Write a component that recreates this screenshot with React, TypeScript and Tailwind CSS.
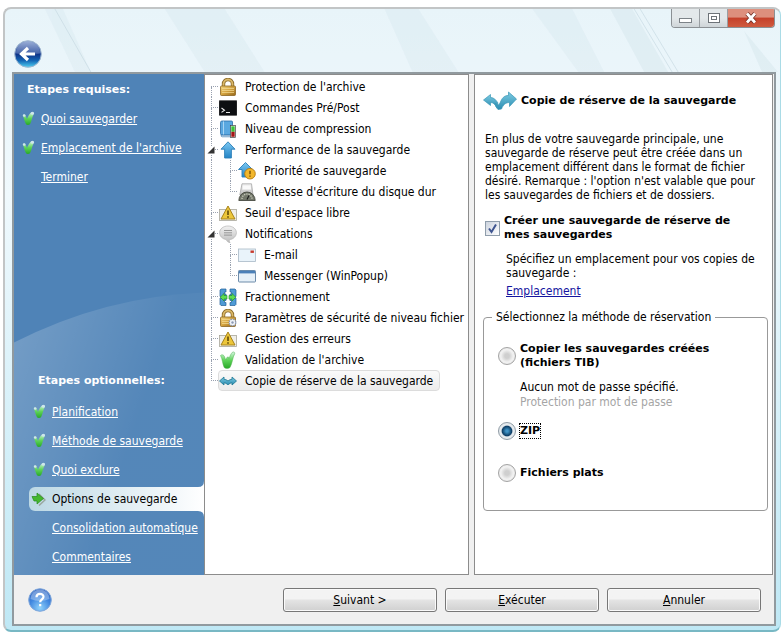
import React, { useState } from 'react';

const FONT = "font-['DejaVu_Sans_Condensed','DejaVu_Sans',sans-serif]";
const BOLD = "font-['DejaVu_Sans',sans-serif] text-[11px] font-bold";

type IconName =
  | 'lock' | 'console' | 'book' | 'arrow' | 'priority' | 'disk' | 'warning' | 'bubble'
  | 'mail' | 'popup' | 'split' | 'lockGear' | 'check' | 'swap';

interface TreeNode {
  label: string;
  icon: IconName;
  children?: TreeNode[];
}

const tree: TreeNode[] = [
  { label: "Protection de l'archive", icon: 'lock' },
  { label: 'Commandes Pré/Post', icon: 'console' },
  { label: 'Niveau de compression', icon: 'book' },
  {
    label: 'Performance de la sauvegarde',
    icon: 'arrow',
    children: [
      { label: 'Priorité de sauvegarde', icon: 'priority' },
      { label: "Vitesse d'écriture du disque dur", icon: 'disk' },
    ],
  },
  { label: "Seuil d'espace libre", icon: 'warning' },
  {
    label: 'Notifications',
    icon: 'bubble',
    children: [
      { label: 'E-mail', icon: 'mail' },
      { label: 'Messenger (WinPopup)', icon: 'popup' },
    ],
  },
  { label: 'Fractionnement', icon: 'split' },
  { label: 'Paramètres de sécurité de niveau fichier', icon: 'lockGear' },
  { label: 'Gestion des erreurs', icon: 'warning' },
  { label: "Validation de l'archive", icon: 'check' },
  { label: 'Copie de réserve de la sauvegarde', icon: 'swap' },
];

const requiredSteps = [
  { label: 'Quoi sauvegarder', done: true },
  { label: "Emplacement de l'archive", done: true },
  { label: 'Terminer', done: false },
];

const optionalSteps = [
  { label: 'Planification', done: true },
  { label: 'Méthode de sauvegarde', done: true },
  { label: 'Quoi exclure', done: true },
  { label: 'Options de sauvegarde', current: true },
  { label: 'Consolidation automatique' },
  { label: 'Commentaires' },
];

// Shared gradients, referenced by id from the icons below
const Gradients = () => (
  <svg width="0" height="0" className="absolute" aria-hidden="true">
    <defs>
      <linearGradient id="gold" x1="0" y1="0" x2="1" y2="1">
        <stop offset="0" stopColor="#f3d580" />
        <stop offset="0.5" stopColor="#d3a23e" />
        <stop offset="1" stopColor="#94661a" />
      </linearGradient>
      <linearGradient id="sky" x1="0" y1="0" x2="0" y2="1">
        <stop offset="0" stopColor="#7cc8f2" />
        <stop offset="1" stopColor="#2384c6" />
      </linearGradient>
      <linearGradient id="teal" x1="0" y1="0" x2="0" y2="1">
        <stop offset="0" stopColor="#7dcbe2" />
        <stop offset="1" stopColor="#2b8db2" />
      </linearGradient>
      <linearGradient id="leaf" x1="0" y1="0" x2="0" y2="1">
        <stop offset="0" stopColor="#d6f5e4" />
        <stop offset="0.5" stopColor="#5fd45a" />
        <stop offset="1" stopColor="#27a827" />
      </linearGradient>
      <linearGradient id="silver" x1="0" y1="0" x2="0" y2="1">
        <stop offset="0" stopColor="#f2f2f2" />
        <stop offset="1" stopColor="#bcbcbc" />
      </linearGradient>
      <linearGradient id="orb" x1="0" y1="0" x2="0" y2="1">
        <stop offset="0" stopColor="#8da4d2" />
        <stop offset="0.45" stopColor="#2c4f9e" />
        <stop offset="0.5" stopColor="#0e3287" />
        <stop offset="0.75" stopColor="#1467b5" />
        <stop offset="1" stopColor="#4fd0f2" />
      </linearGradient>
      <radialGradient id="help" cx="0.5" cy="0.85" r="0.8">
        <stop offset="0" stopColor="#8fd2fb" />
        <stop offset="0.6" stopColor="#3f86df" />
        <stop offset="1" stopColor="#3a6cc4" />
      </radialGradient>
    </defs>
  </svg>
);

const Lock = () => (
  <>
    <path d="M4.500 9V6a4.500 4.500 0 0 1 9 0v3" fill="none" stroke="#8a6a2a" strokeWidth="3.4" />
    <path d="M4.500 9V6a4.500 4.500 0 0 1 9 0v3" fill="none" stroke="#dcb968" strokeWidth="1.8" />
    <rect x="1.5" y="8" width="15" height="9.5" rx="1" fill="url(#gold)" stroke="#8c6420" strokeWidth="0.8" />
    <path d="M3 10.500h12M3 12.500h12M3 14.500h12" stroke="#f5dc96" strokeWidth="0.7" />
  </>
);

const glyphs: Record<IconName, React.ReactNode> = {
  lock: <Lock />,
  console: (
    <>
      <rect x="0" y="1.5" width="18" height="15" rx="0.8" fill="#0d0f12" stroke="#555" strokeWidth="0.6" />
      <path d="M2.500 9 5.500 11.200 2.500 13.400M7 13.500h4" fill="none" stroke="#e8e8e8" strokeWidth="1.1" />
    </>
  ),
  book: (
    <>
      <path d="M3 1h9.500a1 1 0 0 1 1 1v13H3a1.500 1.500 0 0 1-1.500-1.500v-11A1.500 1.500 0 0 1 3 1Z" fill="#5aa8e0" stroke="#2a6ca8" strokeWidth="0.8" />
      <path d="M4.500 1.400v13.200" stroke="#a9d5f4" />
      <path d="M2 15.200h11v1.600H3.500A1.500 1.500 0 0 1 2 15.200Z" fill="#dcebf5" stroke="#2a6ca8" strokeWidth="0.6" />
      <rect x="11.5" y="5.5" width="5" height="12" fill="#fff" stroke="#444" strokeWidth="0.7" />
      <rect x="12.3" y="6.3" width="3.4" height="5.5" fill="#3cc43a" />
      <rect x="12.3" y="11.8" width="3.4" height="5" fill="#a31515" />
    </>
  ),
  arrow: <path d="M9 .8 16 8.200h-3.600V17H5.600V8.200H2Z" fill="url(#sky)" stroke="#2c7fb8" strokeWidth="0.9" />,
  priority: (
    <>
      <path d="M7.500.5 14.500 7.500H11V15H4V7.500H.5Z" fill="url(#sky)" stroke="#2c7fb8" strokeWidth="0.9" />
      <circle cx="12" cy="11.7" r="5.3" fill="#f2b72c" stroke="#b77c10" strokeWidth="0.9" />
      <path d="M12 8.700v3.600M12 13.600v1.200" stroke="#6b4503" strokeWidth="1.3" />
    </>
  ),
  disk: (
    <>
      <path d="M4 .8h9.500L15 12H1.800Z" fill="url(#silver)" stroke="#a5a5a5" strokeWidth="0.8" />
      <path d="M5 2.500h7.500l.6 4H4.400Z" fill="#fafafa" />
      <path d="M.8 17.500a8.200 8.500 0 0 1 16.400 0Z" fill="#72776a" stroke="#3a3d33" strokeWidth="0.8" />
      <path d="M4 16a5 5 0 0 1 10 0" fill="none" stroke="#c9ccbc" strokeWidth="1.3" strokeDasharray="1.3 1" />
      <path d="m9 16.500 2-4" stroke="#1a1a1a" strokeWidth="1.1" />
    </>
  ),
  warning: (
    <>
      <rect x="0.5" y="5.5" width="17" height="11" fill="#efeee8" stroke="#a9a69a" strokeWidth="0.8" />
      <path d="M9 2 16 15H2Z" fill="#ecc63a" stroke="#a8831a" strokeWidth="1" strokeLinejoin="round" />
      <path d="M9 6.500V11M9 12.300v1.400" stroke="#574205" strokeWidth="1.5" />
    </>
  ),
  bubble: (
    <>
      <path d="M9 1c4.800 0 8.400 3 8.400 6.700s-3.400 6.700-6.900 6.900c-.3 1.200-.2 2.200.6 3.100-2.200-.4-3.400-1.600-3.900-3.200C3.400 14 .6 11.200.6 7.700.6 4 4.200 1 9 1Z" fill="url(#silver)" stroke="#b3b3b3" strokeWidth="0.7" />
      <path d="M5 5.500h8M5 7.800h8M5 10.100h8" stroke="#8f8f8f" strokeWidth="0.9" />
    </>
  ),
  mail: (
    <>
      <rect x="0.5" y="3" width="17" height="12.5" fill="#e9f3fa" stroke="#a9b9c6" strokeWidth="0.8" />
      <rect x="12.5" y="4.5" width="3.4" height="2.4" fill="#c83a2c" />
    </>
  ),
  popup: (
    <>
      <rect x="0.5" y="3.5" width="17" height="11.5" rx="0.8" fill="#e6f0f8" stroke="#5f7fa0" strokeWidth="0.9" />
      <rect x="0.9" y="3.8" width="16.2" height="2.6" fill="#4b80b8" />
    </>
  ),
  split: (
    <>
      <path d="M2 1h5v3H5.500v2H7v2.500H1V2ZM16 1h-5v3h1.500v2H11v2.500h6V2ZM2 17.500h5v-3H5.500v-2H7V10H1v6.500ZM16 17.500h-5v-3h1.500v-2H11V10h6v6.500Z" fill="#4f9bd6" stroke="#235f98" strokeWidth="0.7" />
      <path d="M8 7.500V11H5v2L1.200 9.200 5 5.500v2ZM10 7.500V11h3v2l3.800-3.800L13 5.500v2Z" fill="#5fdc52" stroke="#1d8a22" strokeWidth="0.6" />
    </>
  ),
  lockGear: (
    <>
      <Lock />
      <circle cx="13.5" cy="13.5" r="3.3" fill="#f1f4f9" stroke="#8d98ae" strokeWidth="1.3" strokeDasharray="1.7 .9" />
      <circle cx="13.5" cy="13.5" r="1.2" fill="#8e9ab3" />
    </>
  ),
  check: (
    <path d="M1.500 4.500C3 3 5 4 5.600 6l1.200 3L8 6.500c.6-1 1.600-.8 1.800.2l.3 1C10.800 5 12 2.600 13.500 1.200c1.200-.7 2.600.2 2.200 1.500C13.500 6.500 13.500 12 11 16.500c-1.500 1.200-4.500 1.200-5.800 0C3.500 13 3.500 8 1.500 4.500Z" fill="url(#leaf)" stroke="#4ab04a" strokeWidth="0.5" />
  ),
  swap: (
    <path d="M.5 9 5 5v2.300c1.500 0 2.800.7 4 1.700 1.200-1 2.500-1.700 4-1.700V5l4.500 4-4.500 4v-2.200c-1.500 0-2.500 1-4 2-1.500-1-2.500-2-4-2V13Z" fill="url(#teal)" stroke="#1b7592" strokeWidth="0.8" strokeLinejoin="round" />
  ),
};

const Icon: React.FC<{ name: IconName }> = ({ name }) => (
  <svg width="18" height="18" viewBox="0 0 18 18" className="shrink-0" aria-hidden="true">
    {glyphs[name]}
  </svg>
);

const StepCheck = () => (
  <svg width="13" height="15" viewBox="0 0 13 15" aria-hidden="true">
    <path d="M.8 4.800C.8 3 3 3 3.600 4.600L5 8C6 5 7.500 2.800 8.900 1.400 10.500.2 12.700 1.200 11.800 3 10 6 9.800 10 8 13.300c-1 1-3.200 1-4 0C2.400 10.500 2.200 7.500.8 4.800Z" fill="url(#leaf)" />
    <circle cx="10.4" cy="2.2" r="1.5" fill="#cfe6ee" />
    <circle cx="2.2" cy="4.5" r="1.3" fill="#cfe6ee" />
  </svg>
);

const StepArrow = () => (
  <svg width="15" height="14" viewBox="0 0 15 14" aria-hidden="true">
    <path d="m8 2 6 6-6 5.500" fill="none" stroke="#9aa79f" strokeWidth="1.5" />
    <path d="M1 4.500h5V1l6.500 5.500L6 12V9H3Z" fill="#45b82e" stroke="#278a1c" strokeWidth="0.7" />
  </svg>
);

// Dotted branch drawn left of a tree row
const Branch: React.FC<{ first?: boolean; last?: boolean }> = ({ first, last }) => (
  <span className="flex h-full w-[7px] shrink-0 flex-col">
    <span className={`h-1/2 border-b border-dotted border-gray-400 ${first ? '' : 'border-l'}`} />
    <span className={`h-1/2 border-dotted border-gray-400 ${last ? '' : 'border-l'}`} />
  </span>
);

interface TreeItemProps {
  node: TreeNode;
  first?: boolean;
  last?: boolean;
  nested?: boolean;
  selected: string;
  onSelect: (label: string) => void;
}

const TreeItem: React.FC<TreeItemProps> = ({ node, first, last, nested, selected, onSelect }) => {
  const [open, setOpen] = useState(true);
  const active = selected === node.label;

  return (
    <li>
      <div className="flex h-[21px] items-center">
        {nested && <span className="h-full w-[19px] shrink-0 border-l border-dotted border-gray-400" />}
        <span className="relative flex h-full">
          <Branch first={first} last={last} />
          {node.children && (
            <button
              type="button"
              aria-label={node.label}
              aria-expanded={open}
              onClick={() => setOpen(!open)}
              className="absolute top-[7px] -left-1 bg-white"
            >
              <svg width="8" height="8" viewBox="0 0 8 8">
                <path d="M7.500.5v7h-7Z" fill="#333" />
              </svg>
            </button>
          )}
        </span>
        <button
          type="button"
          onClick={() => onSelect(node.label)}
          className={`flex h-[21px] items-center gap-2 rounded-sm border pr-1.5 whitespace-nowrap ${
            active ? 'border-[#dcdcdc] bg-linear-to-b from-[#fafafa] to-[#ececec]' : 'border-transparent'
          }`}
        >
          <Icon name={node.icon} />
          {node.label}
        </button>
      </div>
      {node.children && open && (
        <ul>
          {node.children.map((child, i) => (
            <TreeItem
              key={child.label}
              node={child}
              nested
              last={i === node.children!.length - 1}
              selected={selected}
              onSelect={onSelect}
            />
          ))}
        </ul>
      )}
    </li>
  );
};

const Step: React.FC<{ label: string; done?: boolean; current?: boolean }> = ({ label, done, current }) => {
  if (current) {
    return (
      <li className="relative flex h-[29px] items-center">
        <div className="flex h-6 w-full items-center rounded-l-md bg-linear-to-r from-[#bcd8e4] to-white text-black">
          <span className="flex w-[23px] justify-center pr-1"><StepArrow /></span>
          <a href="#" aria-current="step">{label}</a>
        </div>
        {/* flared corners where the tab meets the list */}
        <svg width="6" height="36" viewBox="0 0 6 36" className="absolute top-1/2 right-0 -translate-y-1/2" aria-hidden="true">
          <path d="M6 0Q6 6 0 6V7H6ZM6 36Q6 30 0 30V29H6Z" fill="#fff" />
        </svg>
      </li>
    );
  }
  return (
    <li className="flex h-[29px] items-center">
      <span className="flex w-[23px] shrink-0 pl-1">{done && <StepCheck />}</span>
      <a href="#" className="whitespace-nowrap underline">{label}</a>
    </li>
  );
};

interface RadioProps {
  id: string;
  current: string;
  onChange: (id: string) => void;
}

const Radio: React.FC<RadioProps> = ({ id, current, onChange }) => (
  <input
    type="radio"
    id={id}
    name="method"
    value={id}
    checked={current === id}
    onChange={() => onChange(id)}
    className="size-[18px] shrink-0 appearance-none rounded-full border border-[#a3a3a3] bg-radial from-[#cfcfcf] from-20% via-[#f2f2f2] via-55% to-[#dedede] checked:border-[#8f9ba5] checked:from-[#3f93c6] checked:from-10% checked:via-[#0d3f66] checked:via-42% checked:to-[#e6ebee] checked:to-52%"
  />
);

const App: React.FC = () => {
  const [selected, setSelected] = useState('Copie de réserve de la sauvegarde');
  const [enabled, setEnabled] = useState(true);
  const [method, setMethod] = useState('zip');

  const footerButton =
    'h-6 w-[154px] rounded-[3px] border border-[#777] bg-linear-to-b from-[#f3f3f3] from-45% via-[#e4e4e4] via-50% to-[#d0d0d0] shadow-[inset_0_0_0_1px_#fafafa]';
  const captionButton =
    'flex w-7 items-center justify-center border-r border-[#9a9fa3] bg-linear-to-b from-[#e3e8ea] from-50% to-[#cfd5d8]';

  return (
    <div className={`flex min-h-screen bg-white pt-[7px] pb-0.5 pl-[3px] text-[12px] leading-[14px] text-black ${FONT}`}>
      <Gradients />
      <div className="relative flex flex-1 flex-col overflow-hidden rounded-lg border-2 border-r border-[#c2c5c6] border-r-[#a9dbe6] border-b-[#78b8c4] bg-linear-to-b from-[#e8f4f9] via-[#f0f9fd] via-30% to-[#bfe8f5] pr-1 pb-1 pl-[7px]">
        <svg className="absolute top-0 left-0 h-[63px] w-full" viewBox="0 0 776 63" preserveAspectRatio="none" aria-hidden="true">
          <path d="M40 0h18l28 63H70ZM160 0h60l40 63h-60ZM380 0h34l40 63h-46ZM528 0h40l32 63h-26Z" fill="#d3e6ee" opacity="0.3" />
          <path d="M50 0 86 63M630 0l38 63M636 0l38 63" stroke="#c3d6df" opacity="0.6" />
          <path d="M606 0h22l36 63h-24ZM740 22l34 41h-16Z" fill="#c9dde6" opacity="0.3" />
        </svg>

        {/* Title bar */}
        <header className="relative flex h-[63px] justify-between">
          <button type="button" aria-label="Retour" className="mt-[31px] ml-0.5 h-7">
            <svg width="28" height="28" viewBox="0 0 28 28">
              <circle cx="14" cy="14" r="13.3" fill="url(#orb)" stroke="#9fb6cf" />
              <path d="M2 13.500a12 12 0 0 1 24 0q-12 3-24 0Z" fill="#fff" opacity="0.15" />
              <path d="m14 8-6.500 6 6.500 6M8.500 14H21" fill="none" stroke="#fff" strokeWidth="3.2" />
            </svg>
          </button>
          <div className="mr-px flex h-[19px] overflow-hidden rounded-b border border-t-0 border-[#8b9094]">
            <button type="button" aria-label="Réduire" className={captionButton}>
              <svg width="14" height="12" viewBox="0 0 14 12">
                <rect x="0.5" y="6.5" width="12" height="4" fill="#fff" stroke="#7d8388" />
              </svg>
            </button>
            <button type="button" aria-label="Agrandir" className={captionButton}>
              <svg width="14" height="12" viewBox="0 0 14 12">
                <rect x="1.5" y="1.5" width="11" height="9" fill="#fff" stroke="#6d7378" />
                <rect x="4.5" y="4.5" width="5" height="3" fill="#fff" stroke="#6d7378" />
              </svg>
            </button>
            <button type="button" aria-label="Fermer" className="flex w-[46px] items-center justify-center bg-linear-to-b from-[#dd8f7d] from-45% via-[#c5402a] via-50% to-[#cf5a3e]">
              <svg width="14" height="12" viewBox="0 0 14 12">
                <path d="m3 1.500 8 9M11 1.500l-8 9" stroke="#6d2a20" strokeWidth="4.2" />
                <path d="m3 1.500 8 9M11 1.500l-8 9" stroke="#fff" strokeWidth="2.8" />
              </svg>
            </button>
          </div>
        </header>

        <div className="relative flex flex-1 flex-col border-2 border-[#919a9f] bg-[#f0f0f0]">
          <div className="flex flex-1">
            {/* Steps */}
            <nav className="relative flex w-[190px] shrink-0 flex-col bg-[#4f83b7] text-white">
              <svg className="absolute top-0 left-0 h-full w-full" viewBox="0 0 190 500" preserveAspectRatio="none" aria-hidden="true">
                <defs>
                  <linearGradient id="wave" x1="0" y1="0" x2="0.7" y2="0.35">
                    <stop offset="0" stopColor="#fff" stopOpacity="0.22" />
                    <stop offset="1" stopColor="#fff" stopOpacity="0.03" />
                  </linearGradient>
                </defs>
                <path d="M0 268Q90 222 190 218V500H0Z" fill="url(#wave)" />
              </svg>
              <div className="relative pt-2 pl-1">
                <h2 className={`pl-[9px] leading-4 ${BOLD}`}>Etapes requises:</h2>
                <ul className="pt-1.5">
                  {requiredSteps.map((s) => <Step key={s.label} {...s} />)}
                </ul>
              </div>
              <div className="relative mt-auto pb-1 pl-[15px]">
                <h2 className={`pb-2 pl-[9px] leading-4 ${BOLD}`}>Etapes optionnelles:</h2>
                <ul>
                  {optionalSteps.map((s) => <Step key={s.label} {...s} />)}
                </ul>
              </div>
            </nav>

            {/* Option tree */}
            <section className="min-w-0 flex-1 overflow-hidden border border-[#8c8c8c] bg-white pt-px pl-1.5" aria-label="Options">
              <ul>
                {tree.map((node, i) => (
                  <TreeItem
                    key={node.label}
                    node={node}
                    first={i === 0}
                    last={i === tree.length - 1}
                    selected={selected}
                    onSelect={setSelected}
                  />
                ))}
              </ul>
            </section>

            {/* Option details */}
            <main className="mr-px ml-[5px] w-[299px] shrink-0 border border-[#8c8c8c] bg-white pr-1 pl-2">
              <h1 className={`flex items-center gap-1 pt-4 leading-4 ${BOLD}`}>
                <svg width="34" height="20" viewBox="0 0 34 20" aria-hidden="true">
                  <path d="M.5 9 7.500 3.500v3C11 6.500 13 9 15 12l-1.500 4.500c-1.500-3.500-3.500-5-6-5v3Z" fill="url(#teal)" stroke="#3a97b6" strokeWidth="0.7" />
                  <path d="M12 12c2 2.500 3.500 2.500 5 0 2-5 4-7.500 8.500-7.500V1L33.500 8l-7 7.500v-4c-4 0-6.500 2.500-8 6.500l-3.500.5c-1.500-1.500-2.500-3.500-3-6.500Z" fill="url(#teal)" stroke="#3a97b6" strokeWidth="0.7" />
                </svg>
                Copie de réserve de la sauvegarde
              </h1>
              <p className="pt-[21px] pl-0.5 whitespace-nowrap">
                En plus de votre sauvegarde principale, une<br />
                sauvegarde de réserve peut être créée dans un<br />
                emplacement différent dans le format de fichier<br />
                désiré. Remarque : l'option n'est valable que pour<br />
                les sauvegardes de fichiers et de dossiers.
              </p>
              <div className="flex items-center gap-1 pt-3 pl-0.5">
                <span className="relative flex size-[15px] shrink-0">
                  <input
                    id="reserve"
                    type="checkbox"
                    checked={enabled}
                    onChange={() => setEnabled(!enabled)}
                    className="peer size-[15px] appearance-none border border-[#8f9dab] bg-linear-to-br from-[#ccd3de] to-white"
                  />
                  <svg width="15" height="15" viewBox="0 0 15 15" className="pointer-events-none absolute hidden peer-checked:block" aria-hidden="true">
                    <path d="m4 7.500 2.500 3.500L11 3.500" fill="none" stroke="#3f5590" strokeWidth="2" />
                  </svg>
                </span>
                <label htmlFor="reserve" className={BOLD}>
                  Créer une sauvegarde de réserve de<br />mes sauvegardes
                </label>
              </div>
              <div className="pt-2.5 pl-[23px] whitespace-nowrap">
                <p>Spécifiez un emplacement pour vos copies de<br />sauvegarde :</p>
                <a href="#" className="mt-1 inline-block text-[#1515a0] underline">Emplacement</a>
              </div>
              <fieldset className="mt-3 rounded border border-[#999] pb-7 pl-3.5">
                <legend className="-ml-1.5 px-1">Sélectionnez la méthode de réservation</legend>
                <div className="flex items-center gap-1 pt-[18px]">
                  <Radio id="tib" current={method} onChange={setMethod} />
                  <label htmlFor="tib" className={BOLD}>
                    Copier les sauvegardes créées<br />(fichiers TIB)
                  </label>
                </div>
                <div className="pt-2.5 pl-[22px] leading-[15px]">
                  <p>Aucun mot de passe spécifié.</p>
                  <p className="text-[#a5a5a5]">Protection par mot de passe</p>
                </div>
                <div className="flex items-center gap-1 pt-3">
                  <Radio id="zip" current={method} onChange={setMethod} />
                  <label htmlFor="zip" className={`outline outline-dotted outline-black ${BOLD}`}>ZIP</label>
                </div>
                <div className="flex items-center gap-1 pt-6">
                  <Radio id="plain" current={method} onChange={setMethod} />
                  <label htmlFor="plain" className={BOLD}>Fichiers plats</label>
                </div>
              </fieldset>
            </main>
          </div>

          {/* Footer */}
          <footer className="flex h-[49px] items-center gap-2 pr-[13px] pl-3.5">
            <button type="button" aria-label="Aide" className="mr-auto">
              <svg width="24" height="24" viewBox="0 0 24 24">
                <circle cx="12" cy="12" r="11.3" fill="url(#help)" stroke="#7fa6da" />
                <path d="M2.500 11a9.500 9.500 0 0 1 19 0q-9.500 4-19 0Z" fill="#fff" opacity="0.3" />
                <path d="M8.500 9.200c0-4.400 7-4.200 7-.4 0 2.500-3.300 2.700-3.300 5.400M12.200 16v2.200" fill="none" stroke="#fff" strokeWidth="2.2" />
              </svg>
            </button>
            <button type="button" className={footerButton}><u>S</u>uivant &gt;</button>
            <button type="button" className={footerButton}><u>E</u>xécuter</button>
            <button type="button" className={footerButton}><u>A</u>nnuler</button>
          </footer>
        </div>
      </div>
    </div>
  );
};

export default App;
